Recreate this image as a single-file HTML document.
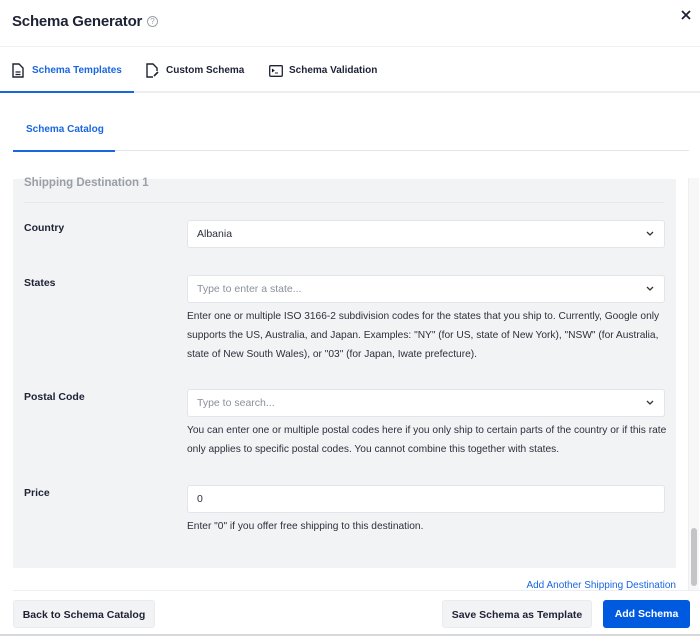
<!DOCTYPE html>
<html><head><style>
*{box-sizing:border-box;margin:0;padding:0}
body{width:700px;height:636px;overflow:hidden;background:#fff;font-family:"Liberation Sans",sans-serif;color:#1e2235;position:relative}
.a{position:absolute}
.lbl{font-size:10.5px;font-weight:bold;color:#1e2235}
.inp{position:absolute;left:187px;width:478px;height:28px;background:#fff;border:1px solid #e3e5ea;border-radius:3px;font-size:10.5px;padding:0 9px;line-height:26px;color:#2a2e3b}
.inp.ph{color:#8a8f99}
.inp svg{position:absolute;right:10px;top:10px}
.help{position:absolute;left:187px;font-size:10.2px;color:#2c303b;line-height:19px;width:482px}
.btn{position:absolute;top:600px;height:28px;border-radius:3px;font-size:10.5px;font-weight:bold;text-align:center;line-height:28px}
.tab{font-size:10px;font-weight:bold}
</style></head><body>
<div class="a" style="left:12px;top:13px;font-size:15px;font-weight:bold;color:#1e2235;letter-spacing:-0.2px">Schema Generator</div>
<div class="a" style="left:147px;top:16px;width:11px;height:11px;border:1px solid #9ca0a8;border-radius:50%;font-size:8px;line-height:9px;text-align:center;color:#9ca0a8">?</div>
<svg class="a" style="left:681px;top:10px" width="10" height="10" viewBox="0 0 10 10"><path d="M1 1L9 9M9 1L1 9" stroke="#1e2235" stroke-width="1.8"/></svg>
<div class="a" style="left:0;top:46px;width:700px;height:1px;background:#eef0f2"></div>
<svg class="a" style="left:12px;top:63px" width="12" height="15" viewBox="0 0 12 15"><path d="M1 1h6l4 4v9H1z" fill="none" stroke="#1e2235" stroke-width="1.4"/><path d="M3.5 9h5M3.5 11.5h5" stroke="#1e2235" stroke-width="1.2"/></svg>
<div class="a tab" style="left:32px;top:65px;color:#1a66e0">Schema Templates</div>
<svg class="a" style="left:146px;top:63px" width="14" height="15" viewBox="0 0 14 15"><path d="M7 14H1V1h6l4 4v3" fill="none" stroke="#1e2235" stroke-width="1.4"/><path d="M8 13l4-4" stroke="#1e2235" stroke-width="1.6"/></svg>
<div class="a tab" style="left:166px;top:65px">Custom Schema</div>
<svg class="a" style="left:269px;top:65px" width="14" height="12" viewBox="0 0 14 12"><rect x="0.7" y="0.7" width="12.6" height="10.6" rx="1" fill="none" stroke="#1e2235" stroke-width="1.3"/><path d="M3 4l2 1.5L3 7M6 8h3" stroke="#1e2235" stroke-width="1"/></svg>
<div class="a tab" style="left:289px;top:65px">Schema Validation</div>
<div class="a" style="left:0;top:91px;width:700px;height:2px;background:#eceef1"></div>
<div class="a" style="left:0;top:91px;width:134px;height:2px;background:#1a66e0"></div>
<div class="a tab" style="left:26px;top:124px;color:#1a66e0">Schema Catalog</div>
<div class="a" style="left:13px;top:150px;width:676px;height:1px;background:#e3e5ea"></div>
<div class="a" style="left:13px;top:150px;width:102px;height:2px;background:#1a66e0"></div>
<div class="a" style="left:13px;top:179px;width:663px;height:389px;background:#f2f3f5"></div>
<div class="a" style="left:24px;top:177px;font-size:11.5px;font-weight:bold;color:#9a9ea6">Shipping Destination 1</div>
<div class="a" style="left:24px;top:202px;width:640px;height:1px;background:#e6e7ea"></div>
<div class="a lbl" style="left:24px;top:222px">Country</div>
<div class="inp" style="top:220px">Albania<svg width="8" height="5" viewBox="0 0 8 5"><path d="M1 1l3 3 3-3" fill="none" stroke="#333" stroke-width="1.3"/></svg></div>
<div class="a lbl" style="left:24px;top:277px">States</div>
<div class="inp ph" style="top:275px">Type to enter a state...<svg width="8" height="5" viewBox="0 0 8 5"><path d="M1 1l3 3 3-3" fill="none" stroke="#333" stroke-width="1.3"/></svg></div>
<div class="help" style="top:307px">Enter one or multiple ISO 3166-2 subdivision codes for the states that you ship to. Currently, Google only supports the US, Australia, and Japan. Examples: "NY" (for US, state of New York), "NSW" (for Australia, state of New South Wales), or "03" (for Japan, Iwate prefecture).</div>
<div class="a lbl" style="left:24px;top:391px">Postal Code</div>
<div class="inp ph" style="top:389px">Type to search...<svg width="8" height="5" viewBox="0 0 8 5"><path d="M1 1l3 3 3-3" fill="none" stroke="#333" stroke-width="1.3"/></svg></div>
<div class="help" style="top:421px">You can enter one or multiple postal codes here if you only ship to certain parts of the country or if this rate only applies to specific postal codes. You cannot combine this together with states.</div>
<div class="a lbl" style="left:24px;top:487px">Price</div>
<div class="inp" style="top:485px">0</div>
<div class="help" style="top:517px">Enter "0" if you offer free shipping to this destination.</div>
<div class="a" style="right:24px;top:580px;font-size:10px;color:#1a66e0">Add Another Shipping Destination</div>
<div class="a" style="left:688px;top:178px;width:11px;height:412px;background:#f7f7f8;border-left:1px solid #eee"></div>
<div class="a" style="left:691px;top:528px;width:6px;height:58px;background:#c4c4c6;border-radius:3px"></div>
<div class="a" style="left:13px;top:590px;width:687px;height:1px;background:#eceef1"></div>
<div class="btn" style="left:13px;width:142px;background:#f2f3f5;border:1px solid #eaebee">Back to Schema Catalog</div>
<div class="btn" style="left:442px;width:150px;background:#f2f3f5;border:1px solid #eaebee">Save Schema as Template</div>
<div class="btn" style="left:603px;width:87px;background:#005ae0;color:#fff">Add Schema</div>
<div class="a" style="left:0;top:634px;width:700px;height:2px;background:#d8d9dc"></div>
</body></html>
